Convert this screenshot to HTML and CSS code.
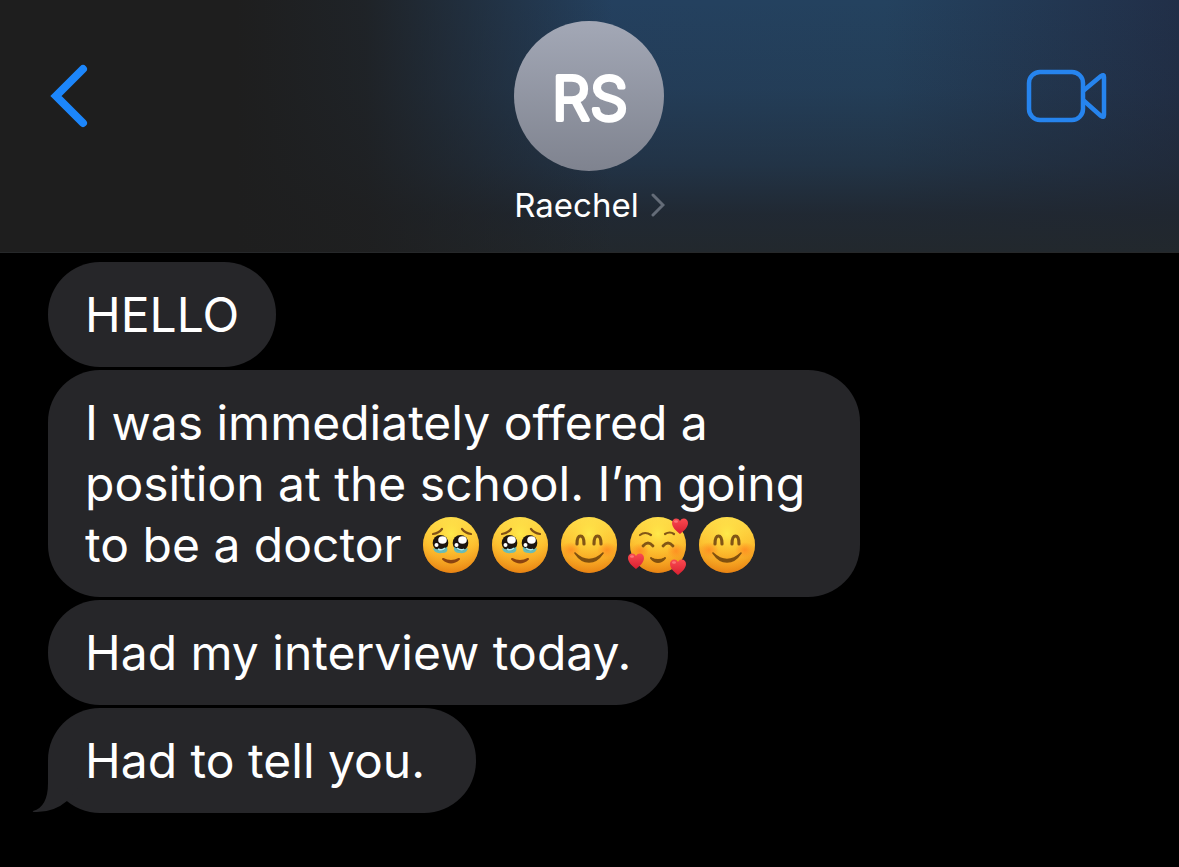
FILE: index.html
```html
<!DOCTYPE html>
<html lang="en">
<head>
<meta charset="utf-8">
<meta name="viewport" content="width=device-width, initial-scale=1">
<title>Raechel</title>
<link rel="stylesheet" href="styles.css">
</head>
<body>
<svg class="defs" aria-hidden="true">
  <defs>
    <linearGradient id="face" x1="0" y1="0" x2="0" y2="1">
      <stop offset="0" stop-color="#fde353"/>
      <stop offset="0.5" stop-color="#fdc030"/>
      <stop offset="1" stop-color="#f28a16"/>
    </linearGradient>
    <radialGradient id="glow" cx="0.5" cy="0.3" r="0.7">
      <stop offset="0" stop-color="#fff04e" stop-opacity="0.8"/>
      <stop offset="0.6" stop-color="#ffc832" stop-opacity="0.2"/>
      <stop offset="1" stop-color="#e07c10" stop-opacity="0.6"/>
    </radialGradient>
    <radialGradient id="blush">
      <stop offset="0" stop-color="#ff8420" stop-opacity="0.75"/>
      <stop offset="1" stop-color="#ff8420" stop-opacity="0"/>
    </radialGradient>
    <linearGradient id="heartfill" x1="0" y1="0" x2="0" y2="1">
      <stop offset="0" stop-color="#fa4a50"/>
      <stop offset="1" stop-color="#d81f30"/>
    </linearGradient>
    <symbol id="base" viewBox="0 0 60 60">
      <circle cx="30" cy="30" r="28" fill="url(#face)"/>
      <circle cx="30" cy="30" r="28" fill="url(#glow)"/>
    </symbol>
    <symbol id="heart" viewBox="0 0 18 18">
      <path d="M9 17C5 14 1 10 1 6C1 1 7 0 9 4C11 0 17 1 17 6C17 10 13 14 9 17Z" fill="url(#heartfill)"/>
      <ellipse cx="5" cy="4.500" rx="2" ry="1.300" fill="#ff8b8b" opacity="0.7"/>
    </symbol>
    <symbol id="tears" viewBox="0 0 60 60">
      <use href="#base"/>
      <path d="M12 19Q18 18 21 14M41 14Q44 18 50 19" fill="none" stroke="#805016" stroke-width="2.200" stroke-linecap="round"/>
      <ellipse cx="19.500" cy="28" rx="7.800" ry="8" fill="#1d1510"/>
      <ellipse cx="39.500" cy="28" rx="7.800" ry="8" fill="#1d1510"/>
      <ellipse cx="21.500" cy="25" rx="4.300" ry="3.800" fill="#fff"/>
      <ellipse cx="41.500" cy="25" rx="4.300" ry="3.800" fill="#fff"/>
      <circle cx="15.500" cy="30" r="2" fill="#fff"/>
      <circle cx="35.500" cy="30" r="2" fill="#fff"/>
      <path d="M12 33Q19 36 26 32Q28 38 21 38Q13 39 12 33ZM33 32Q40 36 47 33Q46 39 39 38Q32 38 33 32Z" fill="#5bbcc4" opacity="0.9"/>
      <path d="M17 34Q21 36 24 33M36 33Q40 36 43 34" fill="none" stroke="#b8edf2" stroke-width="1.500"/>
      <path d="M22 44Q30 51 38 44Q30 48 22 44Z" fill="#8b4310" stroke="#8b4310" stroke-width="2" stroke-linejoin="round"/>
    </symbol>
    <symbol id="smile" viewBox="0 0 60 60">
      <use href="#base"/>
      <ellipse cx="12" cy="35" rx="10" ry="8" fill="url(#blush)"/>
      <ellipse cx="48" cy="35" rx="10" ry="8" fill="url(#blush)"/>
      <path d="M18 29Q18 21 21.500 21Q25 21 25 29M35 29Q35 21 38.500 21Q42 21 42 29" fill="none" stroke="#825616" stroke-width="3.200" stroke-linecap="round"/>
      <path d="M16 38Q30 51 44 38Q38 47 30 47Q22 47 16 38Z" fill="#80500f" stroke="#80500f" stroke-width="1.600" stroke-linejoin="round"/>
    </symbol>
    <symbol id="loving" viewBox="0 0 60 60">
      <use href="#base"/>
      <ellipse cx="12" cy="36" rx="9" ry="8" fill="url(#blush)"/>
      <ellipse cx="48" cy="36" rx="9" ry="8" fill="url(#blush)"/>
      <path d="M12 20Q17 16 23 20M37 19Q42 16 46 19" fill="none" stroke="#825616" stroke-width="2.200" stroke-linecap="round"/>
      <path d="M15 31Q20 25 25 31M35 31Q40 25 45 31" fill="none" stroke="#825616" stroke-width="2.800" stroke-linecap="round"/>
      <path d="M23 43Q30 51 37 43Q30 47 23 43Z" fill="#80500f" stroke="#80500f" stroke-width="2" stroke-linejoin="round"/>
      <use href="#heart" x="43" y="2" width="18" height="18"/>
      <use href="#heart" x="-1" y="37" width="18" height="18"/>
      <use href="#heart" x="41" y="43" width="18" height="18"/>
    </symbol>
  </defs>
</svg>

<header class="header">
  <button class="icon-button back" aria-label="Back">
    <svg width="44" height="70" viewBox="0 0 44 70"><path d="M35 8L8 35L35 62" fill="none" stroke="#1c86fb" stroke-width="8" stroke-linecap="round" stroke-linejoin="miter"/></svg>
  </button>
  <button class="contact">
    <span class="avatar"><svg width="150" height="150" viewBox="0 0 150 150"><text class="initials" x="76" y="99" text-anchor="middle">RS</text></svg></span>
    <span class="contact-name">Raechel
      <svg width="14" height="24" viewBox="0 0 14 24" aria-hidden="true"><path d="M2 2L12 12L2 22" fill="none" stroke="#646c78" stroke-width="3" stroke-linecap="round"/></svg>
    </span>
  </button>
  <button class="icon-button video" aria-label="Video call">
    <svg width="82" height="56" viewBox="0 0 82 56" fill="none" stroke="#2684ee" stroke-width="4.500" stroke-linejoin="round"><rect x="3" y="4" width="54" height="48" rx="11"/><path d="M57 23L75 8Q78 6 78 9V47Q78 50 75 48L57 32"/></svg>
  </button>
</header>

<main class="messages">
  <p class="bubble">HELLO</p>
  <p class="bubble">I was immediately offered a position at the school. I’m going to be a doctor <span class="emojis"><svg class="emoji" role="img" aria-label="Face holding back tears"><use href="#tears"/></svg><svg class="emoji" role="img" aria-label="Face holding back tears"><use href="#tears"/></svg><svg class="emoji" role="img" aria-label="Smiling face"><use href="#smile"/></svg><svg class="emoji" role="img" aria-label="Smiling face with hearts"><use href="#loving"/></svg><svg class="emoji" role="img" aria-label="Smiling face"><use href="#smile"/></svg></span></p>
  <p class="bubble">Had my interview today.</p>
  <p class="bubble last">Had to tell you.<svg class="tail" width="50" height="50" viewBox="0 0 50 50" aria-hidden="true"><path d="M16 0V20Q16 44 1 48Q0 49 2 49Q21 50 35 38L50 20V0Z" fill="#262629"/></svg></p>
</main>
</body>
</html>
```
FILE: styles.css
```css
* {
  box-sizing: border-box;
}

body {
  margin: 0;
  min-height: 100vh;
  background: #000;
  color: #fff;
  font-family: Inter, "Liberation Sans", sans-serif;
}

.defs {
  position: absolute;
  width: 0;
  height: 0;
}

.header {
  display: grid;
  grid-template-columns: 1fr auto 1fr;
  align-items: start;
  padding: 21px 71px 28px 48px;
  border-bottom: 1px solid #26282a;
  background:
    linear-gradient(90deg, #1e1e1e 20%, rgba(30, 30, 30, 0.85) 31%, rgba(30, 30, 30, 0) 52%),
    linear-gradient(180deg, rgba(32, 38, 46, 0) 0%, rgba(32, 38, 46, 0.15) 35%, rgba(32, 38, 46, 0.5) 65%, rgba(32, 38, 46, 0.9) 85%, #22282d 100%),
    linear-gradient(90deg, #24405f 45%, #24425f 75%, #212f48 100%);
}

button {
  padding: 0;
  border: 0;
  background: none;
  color: inherit;
  font: inherit;
  cursor: pointer;
}

svg {
  display: block;
}

.icon-button {
  display: flex;
  align-items: center;
  height: 150px;
}

.video {
  justify-self: end;
}

.contact {
  display: flex;
  flex-direction: column;
  align-items: center;
  gap: 15px;
  margin-left: 23px;
}

.avatar {
  width: 150px;
  height: 150px;
  border-radius: 50%;
  background: linear-gradient(#a3a8b6, #7f838f);
}

.initials {
  fill: #fff;
  stroke: #fff;
  stroke-width: 4px;
  stroke-linejoin: round;
  font-size: 60px;
  font-weight: 300;
}

.contact-name {
  display: flex;
  align-items: center;
  gap: 12px;
  font-size: 33px;
  line-height: 38px;
}

.messages {
  display: flex;
  flex-direction: column;
  align-items: flex-start;
  gap: 3px;
  padding: 9px 48px 54px;
}

.bubble {
  position: relative;
  max-width: 812px;
  margin: 0;
  padding: 22px 37px;
  border-radius: 52px;
  background: #262629;
  font-size: 48px;
  line-height: 61px;
}

.bubble.last {
  padding-right: 51px;
}

.emojis {
  display: inline-flex;
  align-items: flex-end;
  gap: 9px;
  height: 40px;
  margin-left: 6px;
  padding-bottom: 4px;
  vertical-align: middle;
}

.emoji {
  width: 60px;
  height: 60px;
  margin-bottom: -10px;
  overflow: visible;
}

.tail {
  position: absolute;
  left: -16px;
  bottom: 0;
}
```
